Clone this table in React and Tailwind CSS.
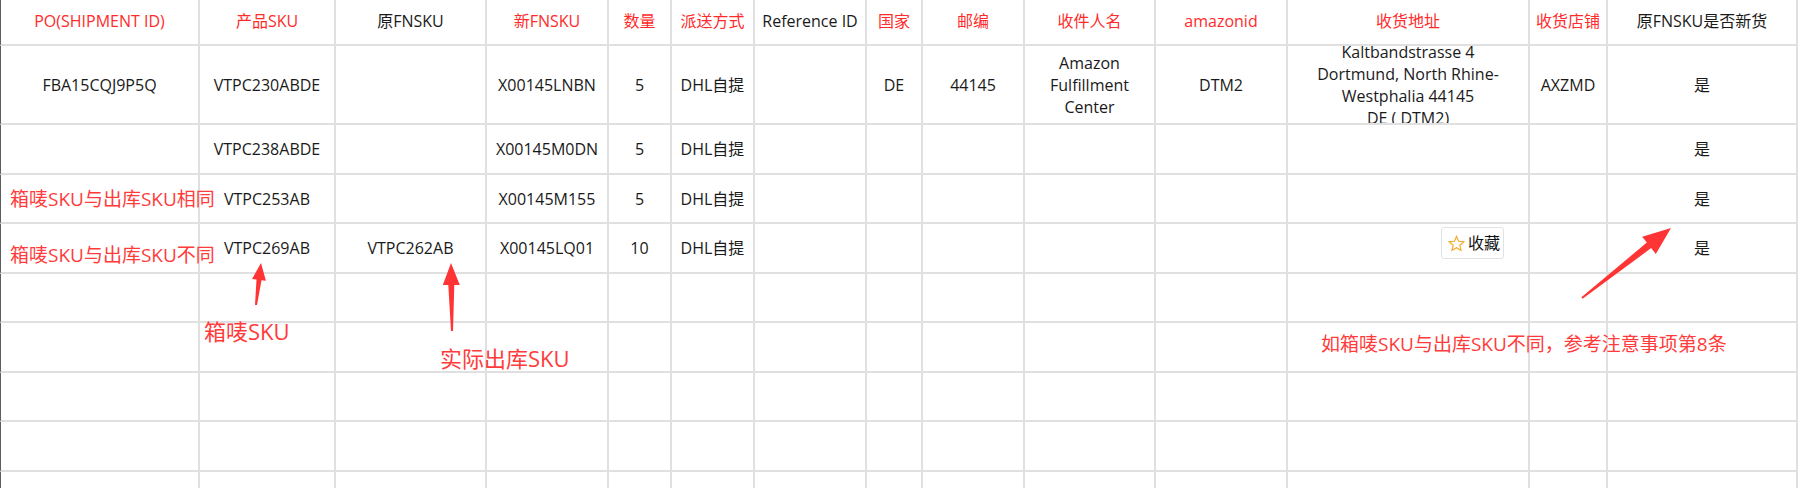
import React from "react";

const R = "text-[#ff2b2b]";
const K = "text-[#1a1a1a]";

const header = [
  ["PO(SHIPMENT ID)", R],
  ["产品SKU", R],
  ["原FNSKU", K],
  ["新FNSKU", R],
  ["数量", R],
  ["派送方式", R],
  ["Reference ID", K],
  ["国家", R],
  ["邮编", R],
  ["收件人名", R],
  ["amazonid", R],
  ["收货地址", R],
  ["收货店铺", R],
  ["原FNSKU是否新货", K],
];

const E = ["", "", "", "", "", "", "", "", "", "", "", "", "", ""];

const rows = [
  [
    "FBA15CQJ9P5Q",
    "VTPC230ABDE",
    "",
    "X00145LNBN",
    "5",
    "DHL自提",
    "",
    "DE",
    "44145",
    ["Amazon", "Fulfillment", "Center"],
    "DTM2",
    ["Kaltbandstrasse 4", "Dortmund, North Rhine-", "Westphalia 44145", "DE ( DTM2)"],
    "AXZMD",
    "是",
  ],
  ["", "VTPC238ABDE", "", "X00145M0DN", "5", "DHL自提", "", "", "", "", "", "", "", "是"],
  [
    { note: "箱唛SKU与出库SKU相同", pad: "pt-0" },
    "VTPC253AB",
    "",
    "X00145M155",
    "5",
    "DHL自提",
    "",
    "",
    "",
    "",
    "",
    "",
    "",
    "是",
  ],
  [
    { note: "箱唛SKU与出库SKU不同", pad: "pt-[13px]" },
    "VTPC269AB",
    "VTPC262AB",
    "X00145LQ01",
    "10",
    "DHL自提",
    "",
    "",
    "",
    "",
    "",
    "",
    "",
    "是",
  ],
  E,
  E,
  E,
  E,
  E,
];

function arrowPoints(tail, tip, headLen, headW, tailW, neckW) {
  const dx = tip[0] - tail[0];
  const dy = tip[1] - tail[1];
  const len = Math.hypot(dx, dy);
  const ux = dx / len;
  const uy = dy / len;
  const nx = -uy;
  const ny = ux;
  const bx = tip[0] - ux * headLen;
  const by = tip[1] - uy * headLen;
  const p = [
    [tail[0] + (nx * tailW) / 2, tail[1] + (ny * tailW) / 2],
    [bx + (nx * neckW) / 2, by + (ny * neckW) / 2],
    [bx + (nx * headW) / 2, by + (ny * headW) / 2],
    [tip[0], tip[1]],
    [bx - (nx * headW) / 2, by - (ny * headW) / 2],
    [bx - (nx * neckW) / 2, by - (ny * neckW) / 2],
    [tail[0] - (nx * tailW) / 2, tail[1] - (ny * tailW) / 2],
  ];
  return p.map((q) => q[0].toFixed(1) + "," + q[1].toFixed(1)).join(" ");
}

const base =
  "flex flex-col justify-center border-r-2 border-b-2 border-[#e0e0e0] text-[16px] leading-[22px] whitespace-nowrap ";

function Cell({ children, first, note, className = "" }) {
  const cls =
    base +
    (first ? "border-l border-l-[#5c5c5c] " : "") +
    (note
      ? "relative z-10 items-start overflow-visible pl-[9px] "
      : "items-center overflow-hidden text-center ") +
    className;
  return <div className={cls}>{children}</div>;
}

function Star() {
  return (
    <svg width="17" height="17" viewBox="0 0 24 24">
      <polygon
        points="12,2 14.9,8.9 22.4,9.6 16.7,14.5 18.4,21.8 12,18 5.6,21.8 7.3,14.5 1.6,9.6 9.1,8.9"
        fill="none"
        stroke="#f5a623"
        strokeWidth="1.6"
        strokeLinejoin="miter"
      />
    </svg>
  );
}

function CellContent({ v }) {
  if (Array.isArray(v)) return v.map((l, li) => <div key={li}>{l}</div>);
  if (v && typeof v === "object")
    return <span className="text-[19px] leading-[24px] text-[#ff3b3b]">{v.note}</span>;
  return v;
}

export default function App() {
  return (
    <div
      className="relative h-[488px] w-[1799px] overflow-hidden bg-white"
      style={{ fontFamily: '"Open Sans", "Noto Sans CJK SC", sans-serif' }}
    >
      <div className="grid grid-cols-[200px_136px_151px_122px_63px_83px_112px_56px_102px_131px_132px_242px_78px_190px] grid-rows-[46px_79px_50px_49px_50px_49px_50px_49px_50px_49px]">
        {header.map(([t, c], i) => (
          <Cell key={"h" + i} first={i === 0} className={c + " pb-[3px]"}>
            {t}
          </Cell>
        ))}
        {rows.map((r, ri) =>
          r.map((v, ci) => {
            const isNote = v && typeof v === "object" && !Array.isArray(v);
            return (
              <Cell
                key={ri + "-" + ci}
                first={ci === 0}
                note={isNote}
                className={isNote ? v.pad : "text-[#1a1a1a]"}
              >
                <CellContent v={v} />
              </Cell>
            );
          })
        )}
      </div>

      {/* hand-drawn red annotations over the sheet */}
      <div className="absolute left-[204px] top-[318px] text-[22px] leading-[26px] text-[#ff3b3b]">
        箱唛SKU
      </div>
      <div className="absolute left-[440px] top-[345px] text-[22px] leading-[26px] text-[#ff3b3b]">
        实际出库SKU
      </div>
      <div className="absolute left-[1321px] top-[331px] text-[19px] leading-[26px] text-[#ff3b3b]">
        如箱唛SKU与出库SKU不同，参考注意事项第8条
      </div>

      {/* favourite button overlay */}
      <div className="absolute left-[1441px] top-[227px] flex h-[32px] w-[63px] items-center gap-[3px] rounded-[3px] border border-[#e3e3e3] bg-white pl-[6px] text-[16px] text-[#111]">
        <Star />
        <span>收藏</span>
      </div>

      {/* arrows */}
      <svg className="pointer-events-none absolute inset-0" width="1799" height="488">
        <polygon fill="#ff3535" points={arrowPoints([256, 305], [261, 263], 17, 14, 2, 5)} />
        <polygon fill="#ff3535" points={arrowPoints([452, 331], [451, 263], 22, 17, 2, 6)} />
        <polygon fill="#ff3535" points={arrowPoints([1582, 298], [1671, 228], 28, 22, 2, 7)} />
      </svg>
    </div>
  );
}
